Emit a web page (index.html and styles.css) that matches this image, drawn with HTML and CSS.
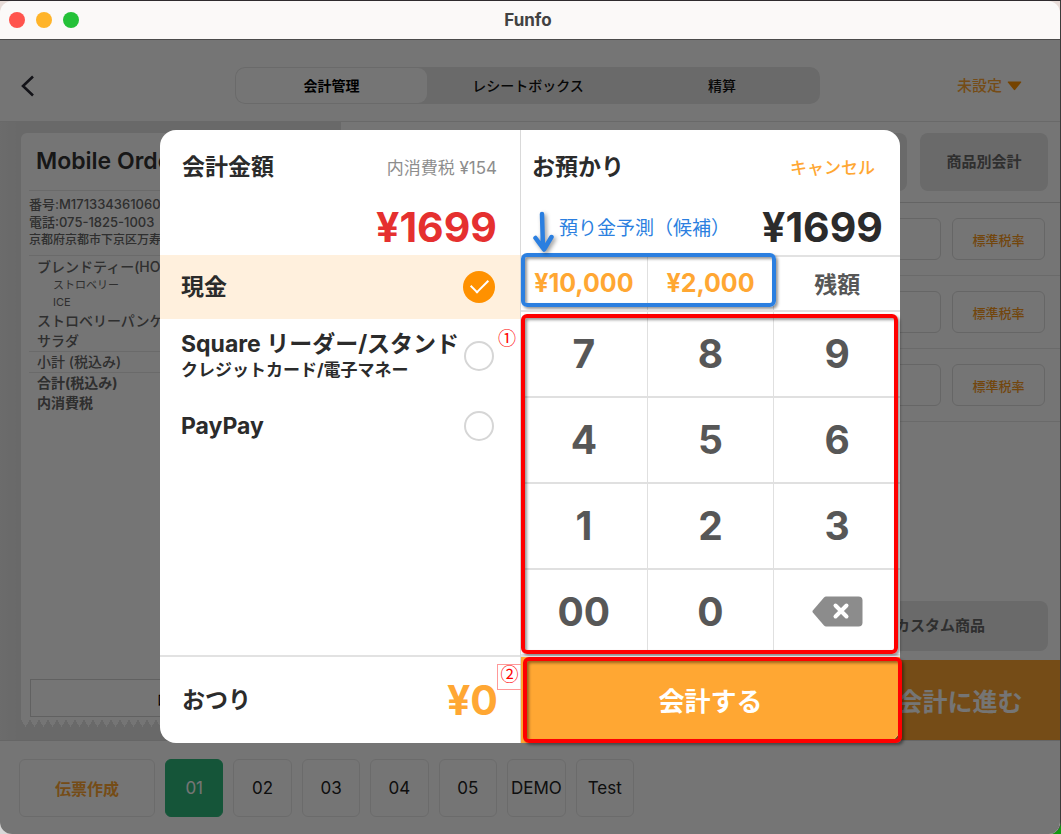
FILE: index.html
```
<!DOCTYPE html>
<html lang="ja">
<head>
  <meta charset="UTF-8">
  <title>Funfo</title>
  <meta name="viewport" content="width=device-width, initial-scale=1.0">
  <link rel="stylesheet" href="styles.css">
</head>
<body>
  <div class="window">
    <header class="titlebar">
      <div class="lights"><span class="light red"></span><span class="light yellow"></span><span class="light green"></span></div>
      <h1>Funfo</h1>
    </header>

    <div class="app">
      <div class="topbar">
        <button class="back" aria-label="戻る">
          <svg width="14" height="22" viewBox="0 0 14 22"><path d="M13 1.5 3 11l10 9.5" fill="none" stroke="#2a2a35" stroke-width="2.6"/></svg>
        </button>
        <nav class="tabs">
          <button class="tab active">会計管理</button>
          <button class="tab">レシートボックス</button>
          <button class="tab">精算</button>
        </nav>
        <button class="unset">未設定 <svg width="15" height="10" viewBox="0 0 15 10"><path d="M1.2.5h12.6q.9.2.3 1L8.2 8.8q-.7.7-1.4 0L.9 1.5Q.3.7 1.2.5z" fill="#ff9300"/></svg></button>
      </div>

      <main class="content">
        <section class="left">
          <div class="receipt">
            <div class="paper">
              <h2>Mobile Order</h2>
              <div class="shop">
                <div class="wide">番号:M171334361060</div>
                <div class="wide">電話:075-1825-1003</div>
                <div>京都府京都市下京区万寿寺</div>
              </div>
              <div class="items">
                <div>ブレンドティー(HOT)</div>
                <div class="option">ストロベリー</div>
                <div class="option">ICE</div>
                <div>ストロベリーパンケーキ</div>
                <div>サラダ</div>
              </div>
              <div class="sum">小計 (税込み)</div>
              <div class="sum total">合計(税込み)</div>
              <div class="sum total">内消費税</div>
              <button class="print">ロゴ</button>
            </div>
            <div class="teeth"></div>
          </div>
        </section>

        <section class="right">
          <div class="splits">
            <button class="grey" aria-label="会計"></button>
            <button class="grey">商品別会計</button>
          </div>
          <div class="line-item"><button aria-label="数量"></button><button>標準税率</button></div>
          <div class="line-item"><button aria-label="数量"></button><button>標準税率</button></div>
          <div class="line-item"><button aria-label="数量"></button><button>標準税率</button></div>
          <button class="grey custom">カスタム商品</button>
          <button class="proceed">会計に進む</button>
        </section>
      </main>

      <footer class="bottombar">
        <button class="create">伝票作成</button>
        <div class="slips">
          <button class="active">01</button>
          <button>02</button>
          <button>03</button>
          <button>04</button>
          <button>05</button>
          <button>DEMO</button>
          <button>Test</button>
        </div>
      </footer>

      <div class="overlay">
        <div class="modal" role="dialog" aria-label="会計">
          <section class="pay">
            <div class="head">
              <div class="head-row"><h3>会計金額</h3><span class="tax">内消費税 ¥154</span></div>
              <div class="amount due">¥1699</div>
            </div>
            <div class="methods">
              <label class="method cash"><span class="name">現金</span><input type="radio" name="method" checked></label>
              <label class="method card"><span><span class="name">Square リーダー/スタンド</span><span class="sub">クレジットカード/電子マネー</span></span><input type="radio" name="method"></label>
              <label class="method"><span class="name">PayPay</span><input type="radio" name="method"></label>
              <span class="mark one">①</span>
            </div>
            <div class="change">
              <h3>おつり</h3><span class="amount">¥0</span>
              <span class="mark two">②</span>
            </div>
          </section>

          <section class="deposit">
            <div class="head">
              <div class="head-row"><h3>お預かり</h3><button class="cancel">キャンセル</button></div>
              <div class="amount">¥1699</div>
              <div class="hint">
                <svg width="26" height="44" viewBox="0 0 26 44"><path d="M9 4 10 38M2.500 28 11 39.500 18.500 27" fill="none" stroke="#2b7fe0" stroke-width="4.500" stroke-linecap="round" stroke-linejoin="round"/></svg>
                <span>預り金予測（候補）</span>
              </div>
            </div>
            <div class="quick">
              <button>¥10,000</button>
              <button>¥2,000</button>
              <button class="rest">残額</button>
              <div class="frame blue"></div>
            </div>
            <div class="keypad">
              <button>7</button><button>8</button><button>9</button>
              <button>4</button><button>5</button><button>6</button>
              <button>1</button><button>2</button><button>3</button>
              <button>00</button><button>0</button>
              <button aria-label="削除">
                <svg width="51" height="31" viewBox="0 0 51 31"><path d="M14 .5h32.500a4 4 0 0 1 4 4v22a4 4 0 0 1-4 4H14q-1 0-2-1L.8 16.500q-.8-1 0-2L12 1.500q1-1 2-1z" fill="#8c8c8c"/><path d="m23.500 9.500 11 11m0-11-11 11" stroke="#fff" stroke-width="4" stroke-linecap="round"/></svg>
              </button>
              <div class="frame keys"></div>
            </div>
            <div class="submit">
              <button>会計する</button>
              <div class="frame go"></div>
            </div>
          </section>
        </div>
      </div>
    </div>
  </div>
</body>
</html>
```
FILE: styles.css
```
* { box-sizing: border-box; }
body { margin: 0; font-family: Inter, "Noto Sans CJK JP", sans-serif; color: #2b2b2b; background: linear-gradient(to right, #d8d8d8 50%, #129a12 50%); }
button { font: inherit; color: inherit; background: none; border: 0; padding: 0; }
h1, h2, h3 { margin: 0; }

.window { display: flex; flex-direction: column; min-height: 100vh; border-top: 1px solid #2f2b2e; border-right: 1px solid #3c3c3c; border-radius: 0 0 12px 12px; overflow: hidden; background: #e8dcd8; }
.titlebar { position: relative; height: 39px; background: #fbf9f8; border-bottom: 1px solid #4b4b4b; border-radius: 12px 12px 0 0; display: flex; align-items: center; justify-content: center; }
.titlebar h1 { font-size: 17px; font-weight: 700; line-height: 20px; padding-right: 4px; color: #424242; }
.lights { position: absolute; left: 9px; display: flex; gap: 11px; }
.light { width: 16px; height: 16px; border-radius: 50%; }
.light.red { background: #ff544d; }
.light.yellow { background: #ffb429; }
.light.green { background: #24c138; }

.app { position: relative; flex: 1; display: flex; flex-direction: column; background: #fff; }

.topbar { display: grid; grid-template-columns: 215px 1fr 220px; align-items: center; height: 82px; padding: 10px 20px 0; border-bottom: 1px solid #e4e4e4; }
.back { justify-self: start; display: flex; }
.tabs { display: flex; height: 37px; padding: 1px; background: #e7e7e7; border-radius: 10px; }
.tab { flex: 1; border-radius: 9px; font-size: 14px; font-weight: 500; line-height: 20px; color: #111; }
.tab.active { flex: 0 0 191px; margin-right: 4px; background: #fff; color: #000; font-weight: 700; }
.unset { justify-self: end; margin-right: 18px; display: flex; align-items: center; gap: 5px; font-size: 15px; font-weight: 500; line-height: 20px; color: #ffa733; }

.content { flex: 1; display: flex; }
.left { width: 341px; padding: 11px 20px 13px 21px; background: linear-gradient(to right, #ebebeb, #e4e4e4 20px); display: flex; }
.receipt { flex: 1; display: flex; flex-direction: column; color: #666; }
.paper { flex: 1; display: flex; flex-direction: column; background: #fff; border-radius: 6px 6px 0 0; padding: 0 8px 2px; }
.paper h2 { font-size: 23px; font-weight: 600; line-height: 57px; padding-left: 7px; color: #333; border-bottom: 1px solid #e6e6e6; }
.shop { padding: 4px 0 6px; font-size: 12px; font-weight: 500; line-height: 18px; white-space: nowrap; border-bottom: 1px solid #e6e6e6; }
.shop .wide { font-size: 13px; }
.items { padding: 1px 8px 0; font-size: 14px; font-weight: 500; line-height: 20px; white-space: nowrap; border-bottom: 1px solid #e6e6e6; }
.items .option { padding-left: 16px; font-size: 11px; line-height: 17px; font-weight: 400; }
.sum { padding-left: 8px; font-size: 14px; font-weight: 500; line-height: 20px; }
.sum.total { font-weight: 700; }
.sum:not(.total) { border-bottom: 1px solid #e6e6e6; }
.print { margin: auto 0 0 1px; height: 38px; border: 1px solid #d4d4d4; font-size: 15px; color: #000; }
.teeth { height: 8px; background: conic-gradient(from -30deg at 50% 100%, #fff 60deg, #0000 0) 0 0 / 9px 8px; }

.right { flex: 1; display: flex; flex-direction: column; }
.splits { display: flex; justify-content: flex-end; gap: 13px; padding: 11px 12px; border-bottom: 1px solid #dadada; }
.grey { width: 128px; height: 58px; border-radius: 8px; background: #e7e7e7; font-size: 15px; font-weight: 700; line-height: 20px; color: #666; }
.line-item { display: flex; justify-content: flex-end; gap: 11px; padding: 15px; border-bottom: 1px solid #e6e6e6; }
.line-item button { width: 93px; height: 42px; border: 1px solid #dedede; border-radius: 6px; font-size: 13px; font-weight: 500; color: #f8991d; }
.custom { align-self: flex-end; width: 216px; height: 50px; margin: auto 12px 9px 0; }
.proceed { align-self: flex-end; width: 200px; height: 80px; background: #ffa733; color: #fff; font-size: 25px; font-weight: 700; }

.bottombar { display: flex; gap: 10px; height: 94px; padding: 18px 20px 17px 19px; border-top: 1px solid #dedede; }
.bottombar button { border: 1px solid #e9e9e9; border-radius: 6px; font-size: 17px; color: #222; }
.bottombar .create { width: 136px; font-weight: 700; color: #ffa733; font-size: 16px; }
.slips { flex: 1; display: flex; gap: 10px; max-width: 469px; }
.slips button { flex: 1 1 0; min-width: 0; }
.bottombar .slips .active { background: #2fba7d; border-color: #2fba7d; color: #fff; }

.overlay { position: absolute; inset: 0; display: flex; align-items: center; justify-content: center; padding-bottom: 2px; background: rgba(0, 0, 0, .54); }
.modal { display: grid; grid-template-columns: 361px 1fr; width: 740px; background: #fff; border-radius: 16px; }
.modal h3 { font-size: 23px; font-weight: 700; line-height: 32px; }

.pay { display: flex; flex-direction: column; border-right: 1px solid #d9d9d9; }
.head { position: relative; height: 125px; padding: 21px 23px 0 22px; }
.head-row { display: flex; justify-content: space-between; align-items: center; }
.tax { font-size: 17px; color: #8d8d8d; }
.amount { font-size: 41px; font-weight: 700; line-height: 48px; text-align: right; }
.head .amount { margin-top: 20px; }
.due { color: #e5302f; }

.methods { position: relative; flex: 1; }
.method { display: flex; align-items: center; justify-content: space-between; height: 66px; padding: 0 26px 0 21px; }
.method.cash { height: 64px; background: #fff0dd; }
.method.card { height: 74px; }
.name { display: block; font-size: 23px; font-weight: 700; line-height: 28px; white-space: nowrap; }
.sub { display: block; font-size: 17px; font-weight: 700; line-height: 24px; white-space: nowrap; }
.method input { appearance: none; flex: none; width: 30px; height: 30px; margin: 0; border: 2px solid #d6d6d6; border-radius: 50%; }
.method input:checked { width: 32px; height: 32px; margin-right: -1px; border: 0; background: #ff9100; display: grid; place-items: center; }
.method input:checked::before { content: ""; width: 15px; height: 8px; margin-bottom: 5px; border: solid #fff; border-width: 0 0 2px 2px; transform: rotate(-45deg); }

.mark { position: absolute; font-size: 18px; line-height: 26px; font-family: "Noto Sans CJK JP", sans-serif; color: #f00; }
.mark.one { right: 4px; top: 69px; }
.mark.two { right: -2px; top: 7px; width: 25px; height: 26px; line-height: 16px; text-align: center; border: 1px solid #f99; }

.change { position: relative; display: flex; align-items: center; justify-content: space-between; height: 88px; padding: 0 22px; border-top: 2px solid #e2e2e2; }
.change .amount { color: #ffa733; }

.deposit { display: flex; flex-direction: column; }
.deposit .head { padding: 21px 17px 0 11px; }
.cancel { margin-right: 8px; font-size: 17px; font-weight: 500; color: #ffa733; }
.hint { position: absolute; left: 12px; top: 80px; display: flex; color: #2b7fe0; font-size: 19px; line-height: 38px; white-space: nowrap; z-index: 1; }
.hint svg { filter: drop-shadow(2px 2px 2px rgba(0, 0, 0, .4)); }

.quick, .keypad { position: relative; display: grid; grid-template-columns: repeat(3, 1fr); gap: 2px 1px; background: #e0e0e0; border-top: 2px solid #e2e2e2; }
.keypad { border-bottom: 2px solid #e2e2e2; }
.quick button, .keypad button { background: #fff; font-weight: 700; color: #575757; }
.quick button { height: 53px; font-size: 25px; color: #ffa733; }
.quick .rest { font-size: 23px; color: #575757; }
.keypad button { height: 84px; font-size: 39px; display: grid; place-items: center; }
.submit { position: relative; border-top: 1px solid #e2e2e2; }
.submit button { display: block; width: 100%; height: 86px; background: #ffa733; color: #fff; font-size: 26px; font-weight: 700; border-radius: 0 0 16px 0; }

/* highlight frames drawn over the controls */
.frame { position: absolute; border: 4px solid #f00; border-radius: 6px; box-shadow: 2px 2px 3px rgba(0, 0, 0, .4), inset 2px 2px 3px rgba(0, 0, 0, .4); pointer-events: none; }
.frame.blue { border-color: #2b7fe0; inset: -4px 0 3px 0; width: 255px; }
.frame.keys { inset: 2px 2px 0 0; }
.frame.go { inset: 0 -2px 0 2px; }
```
